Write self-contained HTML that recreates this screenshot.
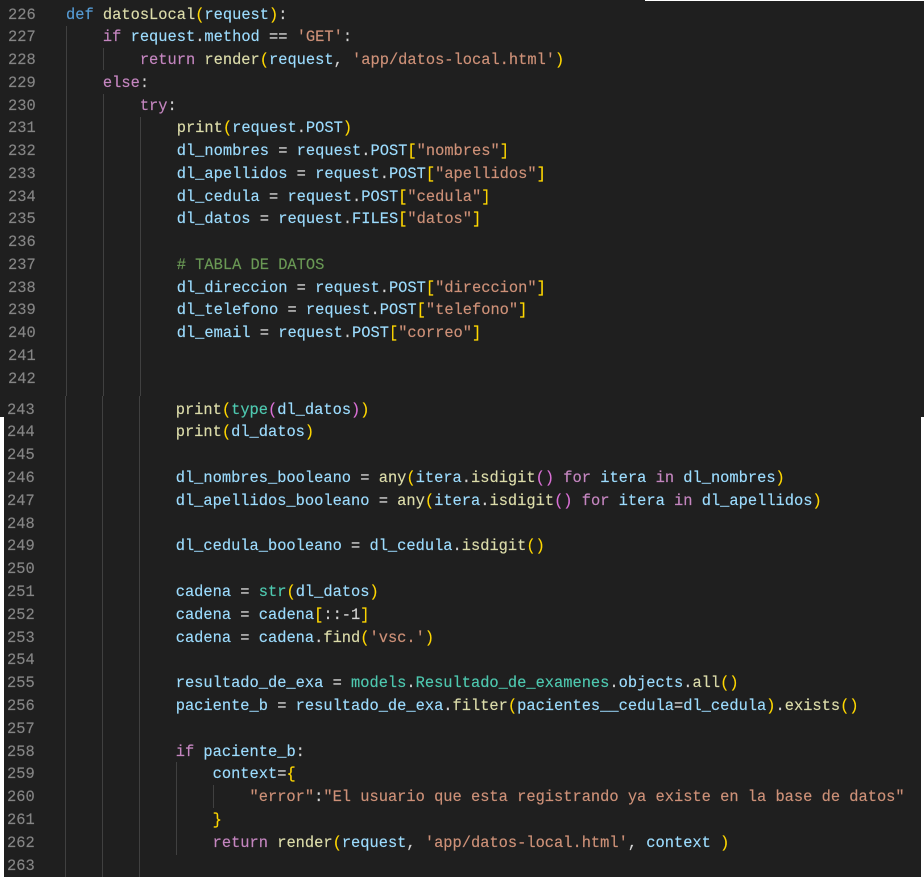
<!DOCTYPE html>
<html><head><meta charset="utf-8"><style>
html,body{margin:0;padding:0;background:#fff}
#r{position:relative;width:924px;height:878px;overflow:hidden;background:#fff}
#bg1{position:absolute;left:0;top:0;width:924px;height:417px;background:#1f1f1f}
#bg0{position:absolute;left:645px;top:0;width:279px;height:1px;background:#fff}
#bg2{position:absolute;left:4px;top:400px;width:917px;height:477px;background:#1f1f1f}
#bg3{position:absolute;left:0;top:0;width:4px;height:413px;background:#1f1f1f}
.g{position:absolute;width:1px;background:#404040}
.b{position:absolute;font:15.38px/22.75px "Liberation Mono",monospace;color:#d4d4d4;-webkit-text-stroke:.15px}
.b div{height:22.75px;position:relative;padding-left:66px;white-space:pre}
.c div{height:22.8px;line-height:22.8px;padding-left:65px}
.b u{position:absolute;left:8px;top:0;text-decoration:none;color:#858585}
.c u{left:7px}
.k{color:#c586c0}.d{color:#569cd6}.f{color:#dcdcaa}.v{color:#9cdcfe}.s{color:#ce9178}.m{color:#6a9955}.t{color:#4ec9b0}.y{color:#ffd700}.p{color:#da70d6}
</style></head><body><div id="r">
<div id="bg1"></div><div id="bg0"></div><div id="bg2"></div><div id="bg3"></div>
<div class="g" style="left:66px;top:26px;height:370px"></div>
<div class="g" style="left:103px;top:48px;height:22px"></div>
<div class="g" style="left:103px;top:94px;height:302px"></div>
<div class="g" style="left:140px;top:117px;height:279px"></div>
<div class="g" style="left:65px;top:396px;height:481px"></div>
<div class="g" style="left:102px;top:396px;height:481px"></div>
<div class="g" style="left:139px;top:396px;height:481px"></div>
<div class="g" style="left:176px;top:762px;height:93px"></div>
<div class="g" style="left:213px;top:785px;height:23px"></div>
<div class="b" style="left:0;top:3.5px;width:924px">
<div><u>226</u><span class="d">def</span> <span class="f">datosLocal</span><span class="y">(</span><span class="v">request</span><span class="y">)</span>:</div>
<div><u>227</u>    <span class="k">if</span> <span class="v">request</span>.<span class="v">method</span> == <span class="s">'GET'</span>:</div>
<div><u>228</u>        <span class="k">return</span> <span class="f">render</span><span class="y">(</span><span class="v">request</span>, <span class="s">'app/datos-local.html'</span><span class="y">)</span></div>
<div><u>229</u>    <span class="k">else</span>:</div>
<div><u>230</u>        <span class="k">try</span>:</div>
<div><u>231</u>            <span class="f">print</span><span class="y">(</span><span class="v">request</span>.<span class="v">POST</span><span class="y">)</span></div>
<div><u>232</u>            <span class="v">dl_nombres</span> = <span class="v">request</span>.<span class="v">POST</span><span class="y">[</span><span class="s">"nombres"</span><span class="y">]</span></div>
<div><u>233</u>            <span class="v">dl_apellidos</span> = <span class="v">request</span>.<span class="v">POST</span><span class="y">[</span><span class="s">"apellidos"</span><span class="y">]</span></div>
<div><u>234</u>            <span class="v">dl_cedula</span> = <span class="v">request</span>.<span class="v">POST</span><span class="y">[</span><span class="s">"cedula"</span><span class="y">]</span></div>
<div><u>235</u>            <span class="v">dl_datos</span> = <span class="v">request</span>.<span class="v">FILES</span><span class="y">[</span><span class="s">"datos"</span><span class="y">]</span></div>
<div><u>236</u></div>
<div><u>237</u>            <span class="m"># TABLA DE DATOS</span></div>
<div><u>238</u>            <span class="v">dl_direccion</span> = <span class="v">request</span>.<span class="v">POST</span><span class="y">[</span><span class="s">"direccion"</span><span class="y">]</span></div>
<div><u>239</u>            <span class="v">dl_telefono</span> = <span class="v">request</span>.<span class="v">POST</span><span class="y">[</span><span class="s">"telefono"</span><span class="y">]</span></div>
<div><u>240</u>            <span class="v">dl_email</span> = <span class="v">request</span>.<span class="v">POST</span><span class="y">[</span><span class="s">"correo"</span><span class="y">]</span></div>
<div><u>241</u></div>
<div><u>242</u></div>
</div>
<div class="b c" style="left:0;top:398.6px;width:924px">
<div><u>243</u>            <span class="f">print</span><span class="y">(</span><span class="t">type</span><span class="p">(</span><span class="v">dl_datos</span><span class="p">)</span><span class="y">)</span></div>
<div><u>244</u>            <span class="f">print</span><span class="y">(</span><span class="v">dl_datos</span><span class="y">)</span></div>
<div><u>245</u></div>
<div><u>246</u>            <span class="v">dl_nombres_booleano</span> = <span class="f">any</span><span class="y">(</span><span class="v">itera</span>.<span class="f">isdigit</span><span class="p">()</span> <span class="k">for</span> <span class="v">itera</span> <span class="k">in</span> <span class="v">dl_nombres</span><span class="y">)</span></div>
<div><u>247</u>            <span class="v">dl_apellidos_booleano</span> = <span class="f">any</span><span class="y">(</span><span class="v">itera</span>.<span class="f">isdigit</span><span class="p">()</span> <span class="k">for</span> <span class="v">itera</span> <span class="k">in</span> <span class="v">dl_apellidos</span><span class="y">)</span></div>
<div><u>248</u></div>
<div><u>249</u>            <span class="v">dl_cedula_booleano</span> = <span class="v">dl_cedula</span>.<span class="f">isdigit</span><span class="y">()</span></div>
<div><u>250</u></div>
<div><u>251</u>            <span class="v">cadena</span> = <span class="t">str</span><span class="y">(</span><span class="v">dl_datos</span><span class="y">)</span></div>
<div><u>252</u>            <span class="v">cadena</span> = <span class="v">cadena</span><span class="y">[</span>::-1<span class="y">]</span></div>
<div><u>253</u>            <span class="v">cadena</span> = <span class="v">cadena</span>.<span class="f">find</span><span class="y">(</span><span class="s">'vsc.'</span><span class="y">)</span></div>
<div><u>254</u></div>
<div><u>255</u>            <span class="v">resultado_de_exa</span> = <span class="t">models</span>.<span class="t">Resultado_de_examenes</span>.<span class="v">objects</span>.<span class="f">all</span><span class="y">()</span></div>
<div><u>256</u>            <span class="v">paciente_b</span> = <span class="v">resultado_de_exa</span>.<span class="f">filter</span><span class="y">(</span><span class="v">pacientes__cedula</span>=<span class="v">dl_cedula</span><span class="y">)</span>.<span class="f">exists</span><span class="y">()</span></div>
<div><u>257</u></div>
<div><u>258</u>            <span class="k">if</span> <span class="v">paciente_b</span>:</div>
<div><u>259</u>                <span class="v">context</span>=<span class="y">{</span></div>
<div><u>260</u>                    <span class="s">"error"</span>:<span class="s">"El usuario que esta registrando ya existe en la base de datos"</span></div>
<div><u>261</u>                <span class="y">}</span></div>
<div><u>262</u>                <span class="k">return</span> <span class="f">render</span><span class="y">(</span><span class="v">request</span>, <span class="s">'app/datos-local.html'</span>, <span class="v">context</span> <span class="y">)</span></div>
<div><u>263</u></div>
</div>
</div></body></html>
